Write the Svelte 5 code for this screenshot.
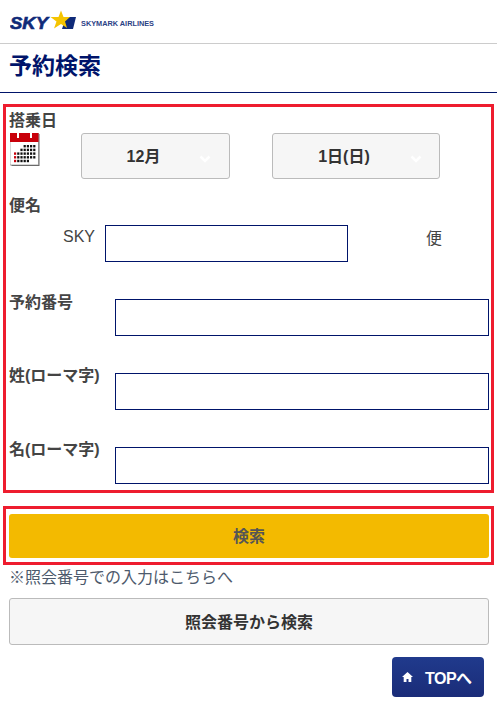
<script lang="ts">
  let month = "12月";
  let day = "1日(日)";
  // spaced rows of the name / reservation inputs
  const fields = [
    { label: "予約番号", cls: "row-no" },
    { label: "姓(ローマ字)", cls: "row-sei" },
    { label: "名(ローマ字)", cls: "row-mei" }
  ];
  const cells = [
    [0,0,0,1,1,1,1],
    [0,0,1,1,1,1,1],
    [1,1,1,1,1,1,1],
    [1,1,1,1,1,1,1],
    [1,1,1,1,1,0,0]
  ];
</script>

<div class="page">
  <header class="logo">
    <svg width="150" height="22" viewBox="0 0 150 22">
      <text x="0" y="19" class="sky" textLength="38" lengthAdjust="spacingAndGlyphs">SKY</text>
      <path d="M56 7 H66 L63 19 H52 Z" fill="#0f2a78" />
      <path d="M51 .5 L53.5 7 H60 L55 11.5 L57 18 L51 14 L44 18.5 L46.5 11.5 L40.5 7 H48.5 Z" fill="#f5c400" />
      <text x="71" y="16" class="airlines" textLength="73" lengthAdjust="spacingAndGlyphs">SKYMARK AIRLINES</text>
    </svg>
  </header>

  <h1>予約検索</h1>

  <section class="box form">
    <div class="lbl">搭乗日</div>
    <div class="date-row">
      <svg class="cal" width="30" height="34" viewBox="0 0 30 34">
        <rect x="1.5" y="1" width="28" height="32" fill="#666" />
        <rect x="0" y="0" width="28.5" height="32" fill="#fff" stroke="#777" stroke-width=".6" />
        <rect x="0" y="0" width="28.5" height="9" fill="#c8000a" />
        <rect x="7" y="0" width="2" height="5" fill="#fff" />
        <rect x="20" y="0" width="2" height="5" fill="#fff" />
        {#each cells as row, r}
          {#each row as on, c}
            {#if on}
              <rect x={4 + c * 3.2} y={12 + r * 3.7} width="2.2" height="2.4" fill={c === 0 ? "#c8000a" : "#111"} />
            {/if}
          {/each}
        {/each}
      </svg>
      <div class="sel sel-m">
        <span>{month}</span>
        <svg class="chev" width="12" height="8" viewBox="0 0 12 8"><path d="M1.5 1.5 L6 6 L10.5 1.5" fill="none" stroke="#fff" stroke-width="2.6" /></svg>
      </div>
      <div class="sel sel-d">
        <span>{day}</span>
        <svg class="chev" width="12" height="8" viewBox="0 0 12 8"><path d="M1.5 1.5 L6 6 L10.5 1.5" fill="none" stroke="#fff" stroke-width="2.6" /></svg>
      </div>
    </div>

    <div class="lbl flight-lbl">便名</div>
    <div class="flight-row">
      <span class="sky-pre">SKY</span>
      <input class="inp flight" type="text" />
      <span class="bin">便</span>
    </div>

    {#each fields as f}
      <div class="field {f.cls}">
        <div class="lbl">{f.label}</div>
        <input class="inp" type="text" />
      </div>
    {/each}
  </section>

  <section class="box submit">
    <button class="search">検索</button>
  </section>

  <p class="note">※照会番号での入力はこちらへ</p>
  <button class="alt">照会番号から検索</button>

  <div class="top-wrap">
    <button class="top">
      <svg width="11" height="10" viewBox="0 0 11 10"><path d="M5.5 0 L11 5 H9.3 V10 H6.5 V7 H4.5 V10 H1.7 V5 H0 Z" fill="#fff" /></svg>
      <span>TOPへ</span>
    </button>
  </div>
</div>

<style>
  :global(body) {
    margin: 0;
    background: #fff;
  }
  .page {
    font-family: "Liberation Sans", "Noto Sans CJK JP", sans-serif;
    color: #444;
    width: 497px;
    height: 701px;
    overflow: hidden;
  }
  .logo {
    border-bottom: 1px solid #ccc;
    padding: 10px 0 0 10px;
    box-sizing: border-box;
    height: 44px;
  }
  .logo svg {
    display: block;
  }
  .sky {
    font: italic 900 17px "Liberation Sans", sans-serif;
    fill: #0f2a78;
    stroke: #0f2a78;
    stroke-width: .6;
  }
  .airlines {
    font: bold 7.4px "Liberation Sans", sans-serif;
    fill: #2a3f85;
  }
  h1 {
    margin: 0;
    height: 49px;
    box-sizing: border-box;
    border-bottom: 1px solid #00146a;
    padding: 7px 0 0 9px;
    font-size: 23px;
    line-height: 30px;
    font-weight: bold;
    color: #00146a;
  }
  .box {
    border: 3px solid #ee1c2e;
    margin: 0 3px;
    box-sizing: border-box;
  }
  .form {
    margin-top: 11px;
    height: 389px;
    padding: 5px 2px 0 4px;
  }
  .lbl {
    font-size: 16px;
    line-height: 18px;
    font-weight: bold;
    color: #444;
    margin-left: -1px;
  }
  .date-row {
    display: flex;
    align-items: flex-start;
    margin-top: 3px;
  }
  .cal {
    flex: none;
    margin-right: 41px;
  }
  .sel {
    height: 46px;
    box-sizing: border-box;
    border: 1px solid #bbb;
    border-radius: 3px;
    background: #f6f6f6;
    display: flex;
    align-items: center;
    position: relative;
    font-size: 16px;
    font-weight: bold;
    color: #333;
  }
  .sel span {
    flex: 1;
    text-align: center;
    padding: 0 24px 2px 0;
  }
  .chev {
    position: absolute;
    right: 18px;
    top: 21px;
  }
  .sel-m {
    width: 149px;
    margin-right: 42px;
  }
  .sel-d {
    width: 168px;
  }
  .sel-d .chev {
    right: 17px;
  }
  .flight-lbl {
    margin-top: 18px;
  }
  .flight-row {
    display: flex;
    align-items: flex-start;
    margin-top: 10px;
  }
  .sky-pre {
    font-size: 16px;
    line-height: 20px;
    margin-left: 53px;
    margin-top: 2px;
    width: 42px;
    color: #444;
  }
  .inp {
    display: block;
    box-sizing: border-box;
    border: 1px solid #00146a;
    border-radius: 0;
    background: #fff;
    height: 37px;
    width: 374px;
    padding: 0;
    margin: 0;
  }
  .flight {
    width: 243px;
  }
  .bin {
    margin-left: 78px;
    font-size: 16px;
    line-height: 24px;
    margin-top: 2px;
  }
  .field {
    display: flex;
    justify-content: space-between;
    align-items: flex-start;
    margin-top: 37px;
  }
  .row-no .lbl {
    margin-top: -5px;
  }
  .row-sei .lbl,
  .row-mei .lbl {
    margin-top: -6px;
  }
  .submit {
    margin-top: 13px;
    height: 59px;
    padding: 5px 2px 4px 3px;
  }
  .search {
    display: block;
    width: 100%;
    height: 44px;
    border: 0;
    border-radius: 3px;
    background: #f3ba00;
    padding: 0 0 2px;
    font: bold 16px "Liberation Sans", "Noto Sans CJK JP", sans-serif;
    color: #555;
  }
  .note {
    margin: 3px 0 0 9px;
    font-size: 16px;
    line-height: 20px;
    color: #4d5a6c;
  }
  .alt {
    display: block;
    margin: 10px 0 0 9px;
    width: 480px;
    height: 47px;
    box-sizing: border-box;
    border: 1px solid #bbb;
    border-radius: 3px;
    background: #f6f6f6;
    padding: 0 0 2px;
    font: bold 16px "Liberation Sans", "Noto Sans CJK JP", sans-serif;
    color: #333;
  }
  .top-wrap {
    display: flex;
    justify-content: flex-end;
    padding: 12px 13px 0 0;
  }
  .top {
    width: 92px;
    height: 40px;
    border: 0;
    border-radius: 4px;
    background: linear-gradient(#203a8c, #1a2c78);
    color: #fff;
    font: bold 16px "Liberation Sans", "Noto Sans CJK JP", sans-serif;
    letter-spacing: -.5px;
    display: flex;
    align-items: center;
    gap: 12px;
    padding: 0 0 0 10px;
  }
</style>
